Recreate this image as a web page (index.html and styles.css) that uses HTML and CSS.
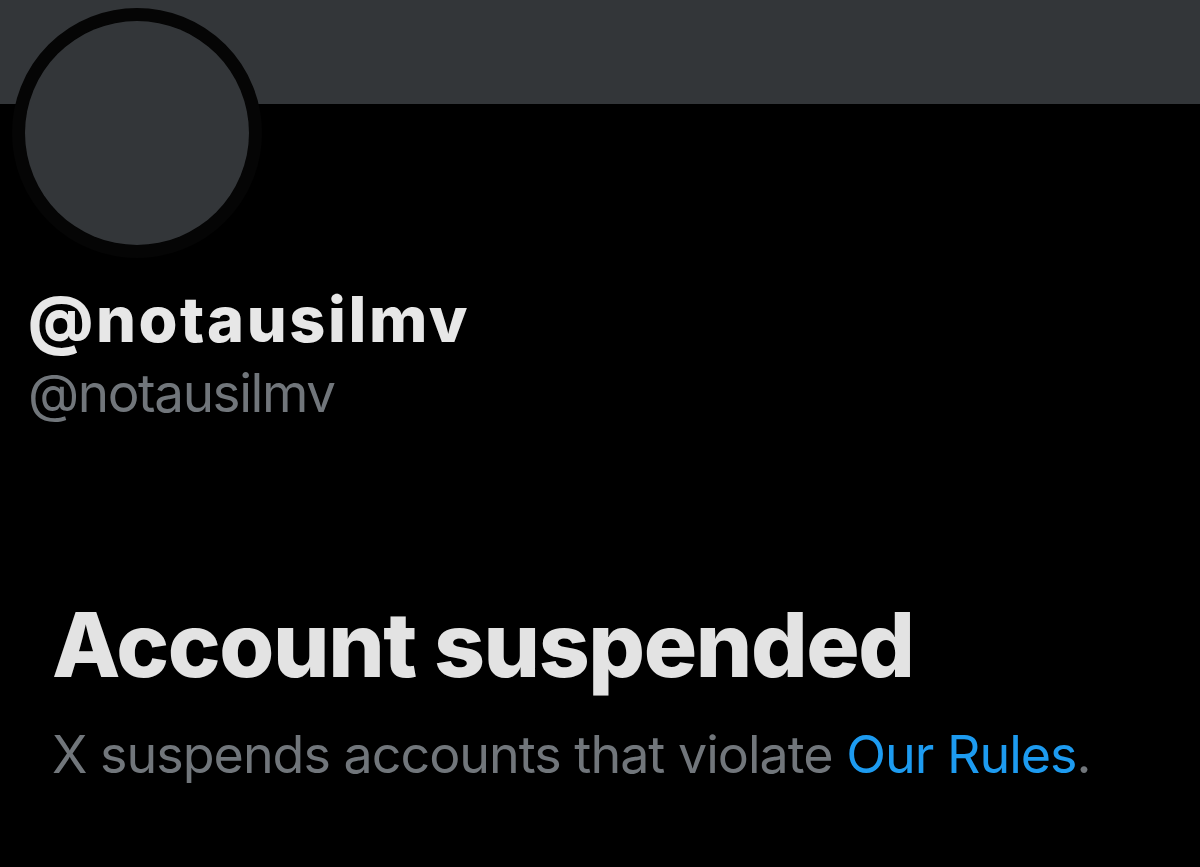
FILE: index.html
```html
<!DOCTYPE html>
<html>
<head>
<meta charset="utf-8">
<link rel="stylesheet" href="styles.css">
</head>
<body>
<div class="page">
  <div class="banner"></div>
  <div class="header">
    <div class="avatar-ring"><div class="avatar"></div></div>
    <div class="names">
      <div class="display-name">@notausilmv</div>
      <div class="handle">@notausilmv</div>
    </div>
  </div>
  <div class="notice">
    <h1 class="notice-title">Account suspended</h1>
    <p class="notice-text">X suspends accounts that violate <a class="rules-link" href="#">Our Rules</a>.</p>
  </div>
</div>
</body>
</html>
```

FILE: styles.css
```css
html, body {
  margin: 0;
  padding: 0;
  background: #000;
}
body {
  font-family: Inter, "Noto Sans", "Liberation Sans", sans-serif;
  width: 1200px;
  height: 867px;
  overflow: hidden;
}
.page {
  position: relative;
}
.banner {
  height: 104px;
  background: #333639;
}
.header {
  padding-left: 12px;
}
.avatar-ring {
  position: absolute;
  left: 12px;
  top: 8px;
  width: 224px;
  height: 224px;
  border: 13px solid #050505;
  border-radius: 50%;
  background: #050505;
}
.avatar {
  width: 224px;
  height: 224px;
  border-radius: 50%;
  background: #333639;
}
.names {
  padding-top: 180px;
  padding-left: 16px;
}
.display-name {
  font-weight: 800;
  font-size: 63px;
  line-height: 70px;
  color: #e7e7e7;
  letter-spacing: 2.6px;
}
.handle {
  margin-top: 11px;
  font-weight: 400;
  font-size: 53px;
  line-height: 56px;
  color: #71767b;
  letter-spacing: -1.4px;
}
.notice {
  padding: 174px 0 0 52px;
}
.notice-title {
  margin: 0;
  font-weight: 800;
  font-size: 89px;
  line-height: 100px;
  color: #e3e3e3;
  letter-spacing: -1.4px;
}
.notice-text {
  margin: 30px 0 0;
  font-size: 52px;
  line-height: 60px;
  color: #71767b;
  letter-spacing: -1px;
}
.rules-link {
  color: #1d9bf0;
  text-decoration: none;
}
```
